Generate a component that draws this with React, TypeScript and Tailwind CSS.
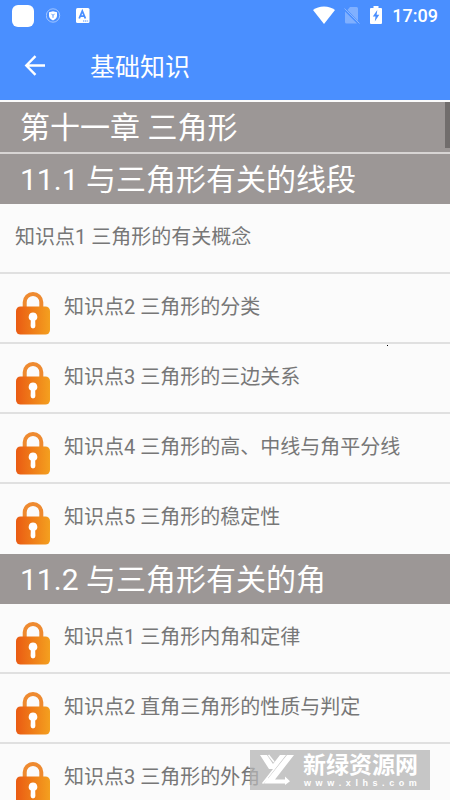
interface Topic {
  title: string
  locked: boolean
}

interface Section {
  title: string
  topics: Topic[]
}

const sections: Section[] = [
  {
    title: "11.1 与三角形有关的线段",
    topics: [
      { title: "知识点1 三角形的有关概念", locked: false },
      { title: "知识点2 三角形的分类", locked: true },
      { title: "知识点3 三角形的三边关系", locked: true },
      { title: "知识点4 三角形的高、中线与角平分线", locked: true },
      { title: "知识点5 三角形的稳定性", locked: true },
    ],
  },
  {
    title: "11.2 与三角形有关的角",
    topics: [
      { title: "知识点1 三角形内角和定律", locked: true },
      { title: "知识点2 直角三角形的性质与判定", locked: true },
      { title: "知识点3 三角形的外角", locked: true },
    ],
  },
]

const LockIcon = () => (
  <svg className="h-11 w-9 shrink-0" viewBox="0 0 36 44" aria-hidden="true">
    <defs>
      <linearGradient id="lock" x1="0" y1="0" x2="1" y2="0">
        <stop offset="0" stopColor="#ea5b13" />
        <stop offset="1" stopColor="#f4a01f" />
      </linearGradient>
    </defs>
    <path d="M9.700 18V11.300a8.300 8.300 0 0 1 16.600 0V18" fill="none" stroke="#ee8a30" strokeWidth="4" />
    <rect x="1" y="15.500" width="34" height="28" rx="4.500" fill="url(#lock)" />
    <path d="M18 21.500a4.300 4.300 0 0 1 2.200 8l.2 5.500a2.400 2.400 0 0 1-4.800 0l.2-5.500a4.300 4.300 0 0 1 2.200-8z" fill="#fff" />
  </svg>
)

const StatusBar = () => (
  <div className="flex h-8 items-center justify-between px-3 text-white">
    <div className="flex items-center gap-3">
      <span className="h-[22px] w-[22px] rounded-md bg-white" />
      <svg className="h-4 w-4" viewBox="0 0 16 16" aria-hidden="true">
        <circle cx="7" cy="7.500" r="6.700" fill="none" stroke="#fff" strokeOpacity=".6" strokeWidth=".8" />
        <path d="M3 4.300 7 3.200l4 1.100v3.400c0 2.200-1.700 3.700-4 4.700-2.300-1-4-2.500-4-4.700z" fill="#fff" />
        <path d="M5.500 5.800 7 7.500l1.500-1.700M7 7.500v2.300" fill="none" stroke="#4a8fff" strokeWidth=".9" />
      </svg>
      <svg className="h-4 w-4" viewBox="0 0 16 16" aria-hidden="true">
        <rect x="2" y="0" width="13.500" height="15" rx="1.500" fill="#fff" />
        <path d="m5.200 10.500 3.100-7.500 3.100 7.500M6.200 8.200h4.200" fill="none" stroke="#4a8fff" strokeWidth="1.800" />
        <path d="M9 13h5.500" stroke="#4a8fff" strokeWidth="1" strokeDasharray="1.200 .6" />
      </svg>
    </div>
    <div className="flex items-center">
      <svg className="h-5 w-6" viewBox="0 0 24 20" aria-hidden="true">
        <path d="M12 18 1 4C4 1.700 7.600.500 12 .500s8 1.200 11 3.500z" fill="#fff" />
      </svg>
      <svg className="ml-2 h-5 w-4" viewBox="0 0 16 20" aria-hidden="true">
        <path d="M6 1h6.500q1.500 0 1.500 1.500v12.500L3.500 4zM1 5.500 13 17.500H2.500Q1 17.500 1 16z" fill="#fff" fillOpacity=".3" />
        <path d="m.500 2.500 15 15" stroke="#fff" strokeOpacity=".35" />
      </svg>
      <svg className="ml-2 h-5 w-4" viewBox="0 0 16 20" aria-hidden="true">
        <path d="M5.500 0h5v2H13q1 0 1 1v14q0 1-1 1H3q-1 0-1-1V3q0-1 1-1h2.500z" fill="#fff" />
        <path d="m9.300 4-4.500 6.500h2.700L6.800 15.500l4.500-6.800H8.600z" fill="#4a8fff" />
      </svg>
      <span className="ml-2 text-lg leading-6 font-medium">17:09</span>
    </div>
  </div>
)

const Heading = ({ title }: { title: string }) => (
  <h2 className="h-[50px] bg-[#9c9796] px-5 text-[30px] leading-[52px] text-white">{title}</h2>
)

const TopicRow = ({ title, locked }: Topic) => (
  <li className="border-b-2 border-[#e0e0e0] last:border-transparent">
    <button type="button" className="flex h-17 w-full items-start gap-[13px] px-[15px] pt-[17px] text-left">
      {locked && <LockIcon />}
      <span className="text-xl leading-8 text-[#777]">{title}</span>
    </button>
  </li>
)

const Watermark = () => (
  <div className="absolute right-5 bottom-[10px] flex h-10 w-45 items-center bg-[#b4b4b4]/75 font-['Liberation_Sans','Noto_Sans_CJK_SC',sans-serif] text-white">
    <svg className="ml-2 h-8 w-10 shrink-0" viewBox="0 0 40 32" aria-hidden="true">
      <path d="M2 1h7l6 9 7-9h6L10 24v1.500L5 30 4 29l11-14h-4z" fill="#fff" />
      <path d="M29 1h7L17 25.500h10V22.500l5 4.700-5 3.800v-1.500H6z" fill="#fff" />
      <path d="M10.500 1 16 8" stroke="#fff" strokeWidth="1.500" />
    </svg>
    <div className="ml-[5px]">
      <p className="text-[23px] leading-[26px] font-bold">新绿资源网</p>
      <p className="flex justify-between px-px text-[9px] leading-[10px] font-bold">
        {[..."www.xlhs.com"].map((c, i) => (
          <span key={i}>{c}</span>
        ))}
      </p>
    </div>
  </div>
)

const App = () => {
  return (
    <div className="relative flex h-screen flex-col overflow-hidden bg-[#fbfbfb] font-[Roboto,'Noto_Sans_CJK_SC',sans-serif]">
      <header className="h-25 shrink-0 bg-[#4a8fff] text-white">
        <StatusBar />
        <div className="flex h-17 items-center">
          <button type="button" aria-label="返回" className="ml-[23px] h-6 w-6">
            <svg viewBox="0 0 24 24" fill="none" stroke="currentColor" strokeWidth="2.400">
              <path d="M22 11.500H3.500M12.500 2.200l-9.200 9.300 9.200 9.300" />
            </svg>
          </button>
          <h1 className="ml-[43px] pt-1 text-[25px] leading-8">基础知识</h1>
        </div>
      </header>

      <main className="relative grow overflow-hidden pt-[2px]">
        <div className="border-b-2 border-[#d8d5d4]">
          <Heading title="第十一章 三角形" />
        </div>
        {sections.map((section) => (
          <section key={section.title}>
            <Heading title={section.title} />
            <ul>
              {section.topics.map((topic) => (
                <TopicRow key={topic.title} {...topic} />
              ))}
            </ul>
          </section>
        ))}
        <span className="absolute top-[2px] right-0 h-[46px] w-[5px] bg-[#716d6c]" />
      </main>

      <span className="absolute top-[345px] left-[387px] h-px w-px bg-black" />
      <Watermark />
    </div>
  )
}

export default App
